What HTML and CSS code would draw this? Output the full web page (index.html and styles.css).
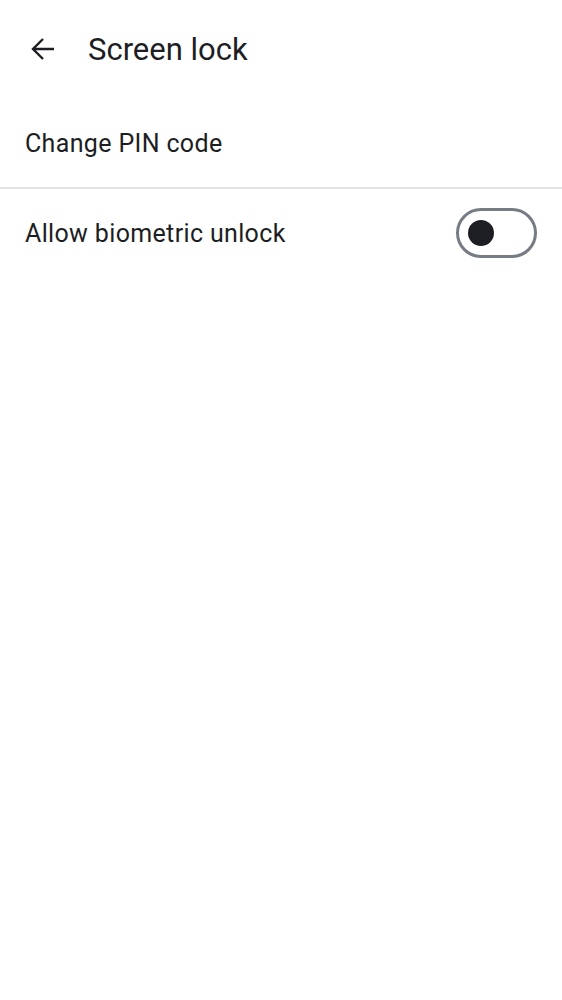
FILE: index.html
```html
<!DOCTYPE html>
<html>
<head>
<meta charset="utf-8">
<link rel="stylesheet" href="styles.css">
</head>
<body>
<header class="appbar">
  <svg class="back" width="24" height="24" viewBox="0 0 24 24"><path d="M23 12H2M12 2 2 12l10 10" fill="none" stroke="#1d1e23" stroke-width="2.4"/></svg>
  <h1 class="title">Screen lock</h1>
</header>
<div class="row first">Change PIN code</div>
<div class="divider"></div>
<div class="row toggle-row">
  <span>Allow biometric unlock</span>
  <span class="switch"><span class="knob"></span></span>
</div>
</body>
</html>
```
FILE: styles.css
```css
html, body { margin: 0; padding: 0; background: #fff; }
body { font-family: Roboto, "Noto Sans", sans-serif; color: #1d1e23; }
.appbar { height: 98px; display: flex; align-items: center; padding-left: 31px; }
.back { display: block; margin-right: 33px; }
.title { margin: 0; font-size: 31px; font-weight: 400; }
.row { height: 88px; display: flex; align-items: center; padding: 0 25px; font-size: 25px; letter-spacing: 0.35px; }
.row.first { height: 89px; padding-top: 2px; box-sizing: border-box; }
.divider { height: 2px; background: #e1e3e6; }
.toggle-row { justify-content: space-between; padding-right: 25px; }
.switch { width: 66px; height: 44px; padding-left: 9px; border: 3px solid #767b84; border-radius: 25px; display: flex; align-items: center; }
.knob { width: 26px; height: 26px; border-radius: 50%; background: #1d1e23; }
```
